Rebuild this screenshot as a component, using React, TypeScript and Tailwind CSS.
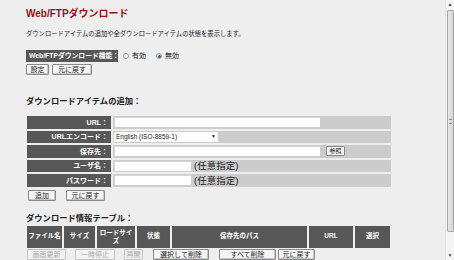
import React from "react";

const font = { fontFamily: '"Liberation Sans", "Noto Sans CJK JP", sans-serif' };

function Btn({ children, w, disabled }: { children: React.ReactNode; w: string; disabled?: boolean }) {
  return (
    <div
      className={`${w} h-[11px] flex items-center justify-center border rounded-[1px] text-[7px] leading-none ${
        disabled
          ? "border-[#c4c4c4] text-[#a8a8a8] bg-[#f2f2f2]"
          : "border-[#8a8a8a] text-[#222] bg-[#f4f4f4] shadow-[inset_-1px_-1px_0_#c8c8c8]"
      }`}
    >
      {children}
    </div>
  );
}

function Radio({ checked }: { checked?: boolean }) {
  return (
    <div className="w-[6px] h-[6px] rounded-full border border-[#9a9a9a] bg-white flex items-center justify-center">
      {checked && <div className="w-[3px] h-[3px] rounded-full bg-[#3a5a9a]" />}
    </div>
  );
}

function Row({ label, children }: { label: string; children?: React.ReactNode }) {
  return (
    <div className="flex gap-[2px] h-[12.5px]">
      <div className="w-[84px] bg-[#575757] text-white font-bold text-[7px] flex items-center justify-end pr-[3px] leading-none">
        {label}
      </div>
      <div className="w-[278px] bg-[#cccccc] flex items-center pl-[1px]">{children}</div>
    </div>
  );
}

function Input({ w }: { w: string }) {
  return <div className={`${w} h-[10px] bg-white border-t border-l border-[#d6d6d6]`} />;
}

export default function App() {
  const cols: [string, string, React.ReactNode][] = [
    ["w-[35px]", "a", "ファイル名"],
    ["w-[31px]", "b", "サイズ"],
    ["w-[38px]", "c", <span key="x" className="text-center leading-[8px]">ロードサイ<br />ズ</span>],
    ["w-[33px]", "d", "状態"],
    ["w-[135px]", "e", "保存先のパス"],
    ["w-[44px]", "f", "URL"],
    ["w-[35px]", "g", "選択"],
  ];
  return (
    <div className="w-[454px] h-[260px] bg-[#eeeeee] flex overflow-hidden text-[#222]" style={font}>
      <div className="flex-1 flex flex-col pl-[26px] pt-[8px]">
        <div className="h-[12px] text-[10px] font-bold text-[#951515] leading-[12px]">Web/FTPダウンロード</div>
        <div className="mt-[10px] h-[8px] text-[6.3px] leading-[8px] whitespace-nowrap">
          ダウンロードアイテムの追加や全ダウンロードアイテムの状態を表示します。
        </div>
        <div className="mt-[12px] flex items-center h-[12px]">
          <div className="w-[92px] h-[12px] bg-[#575757] text-white font-bold text-[6.8px] flex items-center pl-[3px] leading-none whitespace-nowrap">
            Web/FTPダウンロード機能：
          </div>
          <div className="ml-[5px] flex items-center gap-[2px] text-[7px]">
            <Radio />
            <span className="ml-[1px]">有効</span>
          </div>
          <div className="ml-[10px] flex items-center gap-[2px] text-[7px]">
            <Radio checked />
            <span className="ml-[1px]">無効</span>
          </div>
        </div>
        <div className="mt-[2px] flex gap-[3px]">
          <Btn w="w-[23px]">設定</Btn>
          <Btn w="w-[40px]">元に戻す</Btn>
        </div>
        <div className="mt-[21px] h-[10px] text-[8.3px] font-bold leading-[10px] whitespace-nowrap">ダウンロードアイテムの追加：</div>
        <div className="mt-[10px] ml-[1px] flex flex-col gap-[2px]">
          <Row label="URL：">
            <Input w="w-[206px]" />
          </Row>
          <Row label="URLエンコード：">
            <div className="w-[104px] h-[10px] bg-white flex items-center justify-between px-[2px] text-[6.5px] leading-none">
              <span>English (ISO-8859-1)</span>
              <span className="text-[5px]">▼</span>
            </div>
          </Row>
          <Row label="保存先：">
            <Input w="w-[206px]" />
            <div className="ml-[6px] w-[19px] h-[10px] border border-[#8a8a8a] rounded-[1px] bg-[#f2f2f2] text-[6px] flex items-center justify-center leading-none">
              参照
            </div>
          </Row>
          <Row label="ユーザ名：">
            <Input w="w-[77px]" />
            <span className="ml-[3px] text-[9.5px] leading-none">(任意指定)</span>
          </Row>
          <Row label="パスワード：">
            <Input w="w-[77px]" />
            <span className="ml-[3px] text-[9.5px] leading-none">(任意指定)</span>
          </Row>
        </div>
        <div className="mt-[3px] ml-[2px] flex gap-[10px]">
          <Btn w="w-[28px]">追加</Btn>
          <Btn w="w-[39px]">元に戻す</Btn>
        </div>
        <div className="mt-[12px] h-[10px] text-[8.3px] font-bold leading-[10px] whitespace-nowrap">ダウンロード情報テーブル：</div>
        <div className="mt-[3px] ml-[1px] flex gap-[2px] h-[22px]">
          {cols.map(([w, k, c]) => (
            <div key={k} className={`${w} bg-[#575757] text-white font-bold text-[6.5px] flex items-center justify-center leading-none`}>
              {c}
            </div>
          ))}
        </div>
        <div className="mt-[1px] ml-[1px] flex">
          <Btn w="w-[39px]" disabled>画面更新</Btn>
          <div className="ml-[9px]"><Btn w="w-[40px]" disabled>一時停止</Btn></div>
          <div className="ml-[9px]"><Btn w="w-[19px]" disabled>再開</Btn></div>
          <div className="ml-[10px]"><Btn w="w-[56px]">選択して削除</Btn></div>
          <div className="ml-[10px]"><Btn w="w-[57px]">すべて削除</Btn></div>
          <div className="ml-[2px]"><Btn w="w-[37px]">元に戻す</Btn></div>
        </div>
      </div>
      <div className="w-[9px] h-full bg-[#f4f4f4] border-l border-[#e0e0e0] flex flex-col items-center">
        <div className="h-[9px] text-[5px] text-[#444] flex items-center leading-none">▲</div>
        <div className="w-[7px] h-[222px] mt-[1px] rounded-[1px] border border-[#a8a8a8] bg-[linear-gradient(to_right,#e8e8e8,#d4d4d4)] flex items-center justify-center">
          <div className="w-[3px] h-[5px] border-y border-[#888]" />
        </div>
        <div className="flex-1" />
        <div className="h-[9px] text-[5px] text-[#444] flex items-center leading-none">▼</div>
      </div>
    </div>
  );
}
